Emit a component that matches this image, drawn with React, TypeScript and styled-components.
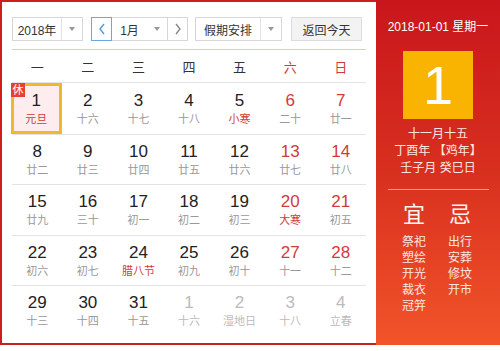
import React from "react";
import styled, { createGlobalStyle } from "styled-components";

const Global = createGlobalStyle`
  html, body { margin: 0; padding: 0; background: #fff; }
  body { font-family: "Liberation Sans", "Noto Sans CJK SC", sans-serif; }
`;

const Frame = styled.div`
  width: 500px;
  height: 345px;
  box-sizing: border-box;
  border: 2px solid #cc1f1c;
  display: flex;
`;

const Left = styled.div`
  width: 374px;
  box-sizing: border-box;
  padding: 15px 10px 0 10px;
  display: flex;
  flex-direction: column;
`;

const Toolbar = styled.div`
  display: flex;
  align-items: center;
  height: 24px;
  padding-bottom: 8px;
  border-bottom: 1px solid #ecc6c2;
`;

const Select = styled.div<{ $w: number; $ml?: number }>`
  width: ${(p) => p.$w}px;
  margin-left: ${(p) => p.$ml ?? 0}px;
  height: 24px;
  box-sizing: border-box;
  border: 1px solid #d8d8d8;
  display: flex;
  align-items: stretch;
  font-size: 12px;
  color: #333;
  background: #fff;
`;

const SelText = styled.div`
  flex: 1;
  display: flex;
  align-items: center;
  justify-content: center;
`;

const Caret = styled.div<{ $line?: boolean }>`
  width: 20px;
  display: flex;
  align-items: center;
  justify-content: center;
  border-left: ${(p) => (p.$line ? "1px solid #e2e2e2" : "none")};
  &::after {
    content: "";
    border-left: 3px solid transparent;
    border-right: 3px solid transparent;
    border-top: 4px solid #999;
  }
`;

const MonthGroup = styled.div`
  margin-left: 8px;
  display: flex;
  height: 24px;
`;

const Arrow = styled.div<{ $active?: boolean }>`
  width: 21px;
  height: 24px;
  box-sizing: border-box;
  border: 1px solid ${(p) => (p.$active ? "#6aa8e0" : "#d8d8d8")};
  display: flex;
  align-items: center;
  justify-content: center;
  background: #fff;
`;

const MonthSel = styled.div`
  width: 55px;
  height: 24px;
  box-sizing: border-box;
  border-top: 1px solid #d8d8d8;
  border-bottom: 1px solid #d8d8d8;
  display: flex;
  font-size: 12px;
  color: #333;
`;

const TodayBtn = styled.div`
  margin-left: 9px;
  width: 71px;
  height: 24px;
  box-sizing: border-box;
  border: 1px solid #dcdcdc;
  background: #f3f3f3;
  font-size: 12px;
  color: #333;
  display: flex;
  align-items: center;
  justify-content: center;
`;

const Week = styled.div`
  display: grid;
  grid-template-columns: repeat(7, 1fr);
  height: 32px;
  align-items: center;
  border-bottom: 1px solid #e3e3e3;
`;

const WeekDay = styled.div<{ $red?: boolean }>`
  text-align: center;
  font-size: 13px;
  color: ${(p) => (p.$red ? "#d23a3a" : "#333")};
`;

const Days = styled.div`
  display: grid;
  grid-template-columns: repeat(7, 1fr);
  grid-auto-rows: 50.5px;
`;

const Cell = styled.div<{ $sel?: boolean; $first?: boolean }>`
  position: relative;
  box-sizing: border-box;
  border-top: ${(p) => (p.$first ? "none" : "1px solid #e3e3e3")};
  display: flex;
  flex-direction: column;
  align-items: center;
  padding-top: ${(p) => (p.$first ? 8 : 7)}px;
  ${(p) =>
    p.$sel
      ? `background:#fdedef; box-shadow: inset 0 0 0 3px #f4b62a; margin: 0 1px 0 -1px;`
      : ""}
`;

const Num = styled.div<{ $tone: string }>`
  font-size: 17px;
  line-height: 20px;
  color: ${(p) => p.$tone};
`;

const Lunar = styled.div<{ $tone: string }>`
  font-size: 11px;
  line-height: 15px;
  margin-top: 1px;
  color: ${(p) => p.$tone};
`;

const Badge = styled.div`
  position: absolute;
  left: 0;
  top: 0;
  width: 14px;
  height: 14px;
  background: #e8402e;
  color: #fff;
  font-size: 11px;
  line-height: 14px;
  text-align: center;
`;

const Right = styled.div`
  width: 124px;
  margin: -2px -2px -2px 0;
  background: linear-gradient(180deg, #c9161c 0%, #d8301f 50%, #f2542a 100%);
  color: #fff;
  display: flex;
  flex-direction: column;
  align-items: center;
  padding-top: 19px;
  box-sizing: border-box;
`;

const DateLine = styled.div`
  font-size: 12px;
  line-height: 16px;
`;

const BigDay = styled.div`
  margin-top: 16px;
  width: 70px;
  height: 68px;
  background: #f8b400;
  display: flex;
  align-items: center;
  justify-content: center;
  font-size: 54px;
  line-height: 1;
`;

const LunarInfo = styled.div`
  margin-top: 7px;
  font-size: 12px;
  line-height: 17px;
  text-align: center;
  color: #fde7e0;
`;

const Divider = styled.div`
  margin-top: 12px;
  width: 101px;
  height: 1px;
  background: rgba(255, 200, 190, 0.7);
`;

const Columns = styled.div`
  display: flex;
  gap: 22px;
  margin-top: 12px;
  margin-left: -2px;
`;

const Col = styled.div`
  display: flex;
  flex-direction: column;
  align-items: center;
`;

const Head = styled.div`
  font-size: 22px;
  line-height: 26px;
  margin-bottom: 6px;
  color: #fff3ee;
`;

const Item = styled.div`
  font-size: 12px;
  line-height: 16px;
  color: #fde7e0;
`;

const ChevL = ({ c }: { c: string }) => (
  <svg width="8" height="12" viewBox="0 0 8 12">
    <path d="M6 1 L2 6 L6 11" stroke={c} strokeWidth="1.4" fill="none" />
  </svg>
);
const ChevR = ({ c }: { c: string }) => (
  <svg width="8" height="12" viewBox="0 0 8 12">
    <path d="M2 1 L6 6 L2 11" stroke={c} strokeWidth="1.4" fill="none" />
  </svg>
);

type D = { n: number; l: string; lr?: boolean; other?: boolean };
const days: D[] = [
  { n: 1, l: "元旦", lr: true }, { n: 2, l: "十六" }, { n: 3, l: "十七" }, { n: 4, l: "十八" }, { n: 5, l: "小寒", lr: true }, { n: 6, l: "二十" }, { n: 7, l: "廿一" },
  { n: 8, l: "廿二" }, { n: 9, l: "廿三" }, { n: 10, l: "廿四" }, { n: 11, l: "廿五" }, { n: 12, l: "廿六" }, { n: 13, l: "廿七" }, { n: 14, l: "廿八" },
  { n: 15, l: "廿九" }, { n: 16, l: "三十" }, { n: 17, l: "初一" }, { n: 18, l: "初二" }, { n: 19, l: "初三" }, { n: 20, l: "大寒", lr: true }, { n: 21, l: "初五" },
  { n: 22, l: "初六" }, { n: 23, l: "初七" }, { n: 24, l: "腊八节", lr: true }, { n: 25, l: "初九" }, { n: 26, l: "初十" }, { n: 27, l: "十一" }, { n: 28, l: "十二" },
  { n: 29, l: "十三" }, { n: 30, l: "十四" }, { n: 31, l: "十五" }, { n: 1, l: "十六", other: true }, { n: 2, l: "湿地日", other: true }, { n: 3, l: "十八", other: true }, { n: 4, l: "立春", other: true },
];

export default function App() {
  return (
    <>
      <Global />
      <Frame>
        <Left>
          <Toolbar>
            <Select $w={71}>
              <SelText>2018年</SelText>
              <Caret $line />
            </Select>
            <MonthGroup>
              <Arrow $active>
                <ChevL c="#4d9be0" />
              </Arrow>
              <MonthSel>
                <SelText>1月</SelText>
                <Caret />
              </MonthSel>
              <Arrow>
                <ChevR c="#888" />
              </Arrow>
            </MonthGroup>
            <Select $w={87} $ml={7}>
              <SelText>假期安排</SelText>
              <Caret $line />
            </Select>
            <TodayBtn>返回今天</TodayBtn>
          </Toolbar>
          <Week>
            {["一", "二", "三", "四", "五", "六", "日"].map((w, i) => (
              <WeekDay key={w} $red={i >= 5}>
                {w}
              </WeekDay>
            ))}
          </Week>
          <Days>
            {days.map((d, i) => {
              const weekend = i % 7 >= 5;
              const numTone = d.other ? "#bbb" : weekend ? "#d23a3a" : "#222";
              const lunTone = d.other ? "#bbb" : d.lr ? "#d23a3a" : "#999";
              return (
                <Cell key={i} $sel={i === 0} $first={i < 7}>
                  {i === 0 && <Badge>休</Badge>}
                  <Num $tone={numTone}>{d.n}</Num>
                  <Lunar $tone={lunTone}>{d.l}</Lunar>
                </Cell>
              );
            })}
          </Days>
        </Left>
        <Right>
          <DateLine>2018-01-01 星期一</DateLine>
          <BigDay>1</BigDay>
          <LunarInfo>
            十一月十五
            <br />
            丁酉年 【鸡年】
            <br />
            壬子月 癸巳日
          </LunarInfo>
          <Divider />
          <Columns>
            <Col>
              <Head>宜</Head>
              {["祭祀", "塑绘", "开光", "裁衣", "冠笄"].map((t) => (
                <Item key={t}>{t}</Item>
              ))}
            </Col>
            <Col>
              <Head>忌</Head>
              {["出行", "安葬", "修坟", "开市"].map((t) => (
                <Item key={t}>{t}</Item>
              ))}
            </Col>
          </Columns>
        </Right>
      </Frame>
    </>
  );
}
